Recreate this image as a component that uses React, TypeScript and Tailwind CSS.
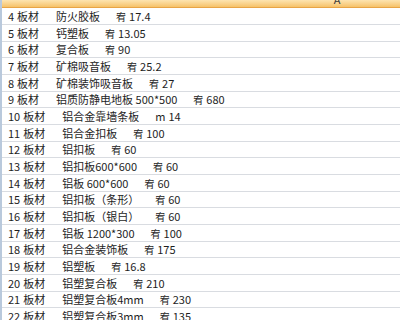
const rows: { n: number; name: string; unit: string; value: string }[] = [
  { n: 4, name: "防火胶板", unit: "宥", value: "17.4" },
  { n: 5, name: "钙塑板", unit: "宥", value: "13.05" },
  { n: 6, name: "复合板", unit: "宥", value: "90" },
  { n: 7, name: "矿棉吸音板", unit: "宥", value: "25.2" },
  { n: 8, name: "矿棉装饰吸音板", unit: "宥", value: "27" },
  { n: 9, name: "铝质防静电地板 500*500", unit: "宥", value: "680" },
  { n: 10, name: "铝合金靠墙条板", unit: "m", value: "14" },
  { n: 11, name: "铝合金扣板", unit: "宥", value: "100" },
  { n: 12, name: "铝扣板", unit: "宥", value: "60" },
  { n: 13, name: "铝扣板600*600", unit: "宥", value: "60" },
  { n: 14, name: "铝板 600*600", unit: "宥", value: "60" },
  { n: 15, name: "铝扣板（条形）", unit: "宥", value: "60" },
  { n: 16, name: "铝扣板（银白）", unit: "宥", value: "60" },
  { n: 17, name: "铝板 1200*300", unit: "宥", value: "100" },
  { n: 18, name: "铝合金装饰板", unit: "宥", value: "175" },
  { n: 19, name: "铝塑板", unit: "宥", value: "16.8" },
  { n: 20, name: "铝塑复合板", unit: "宥", value: "210" },
  { n: 21, name: "铝塑复合板4mm", unit: "宥", value: "230" },
  { n: 22, name: "铝塑复合板3mm", unit: "宥", value: "135" },
];

export default function App() {
  return (
    <div
      className="h-[320px] w-[400px] overflow-hidden bg-white text-[11px] text-[#1e1e1e]"
      style={{ fontFamily: '"Noto Sans CJK SC", "Noto Sans", sans-serif' }}
    >
      <div className="flex h-full border-l-2 border-[#b9c9dc]">
        <div className="flex min-w-0 flex-1 flex-col">
          <div className="flex h-[8px] shrink-0 overflow-hidden border-b border-[#e8a446] bg-gradient-to-b from-[#fde4b0] to-[#f6c268]">
            <div className="w-[670px] shrink-0 text-center">
              <span className="-mt-[6px] block leading-[11px] text-[#3a3a3a]">A</span>
            </div>
          </div>
          {rows.map((r, i) => (
            <div
              key={r.n}
              className={`flex shrink-0 items-center whitespace-nowrap border-b border-[#d9dce1] pl-[6px] ${
                i % 3 === 2 ? "h-[16px]" : "h-[17px]"
              }`}
            >
              <span>{r.n}</span>
              <span className="ml-[3px]">板材</span>
              <span className="ml-[17px]">{r.name}</span>
              <span className={r.unit === "m" ? "ml-[16px]" : "ml-[16px] text-[10px]"}>{r.unit}</span>
              <span className="ml-[3px]">{r.value}</span>
            </div>
          ))}
        </div>
      </div>
    </div>
  );
}
